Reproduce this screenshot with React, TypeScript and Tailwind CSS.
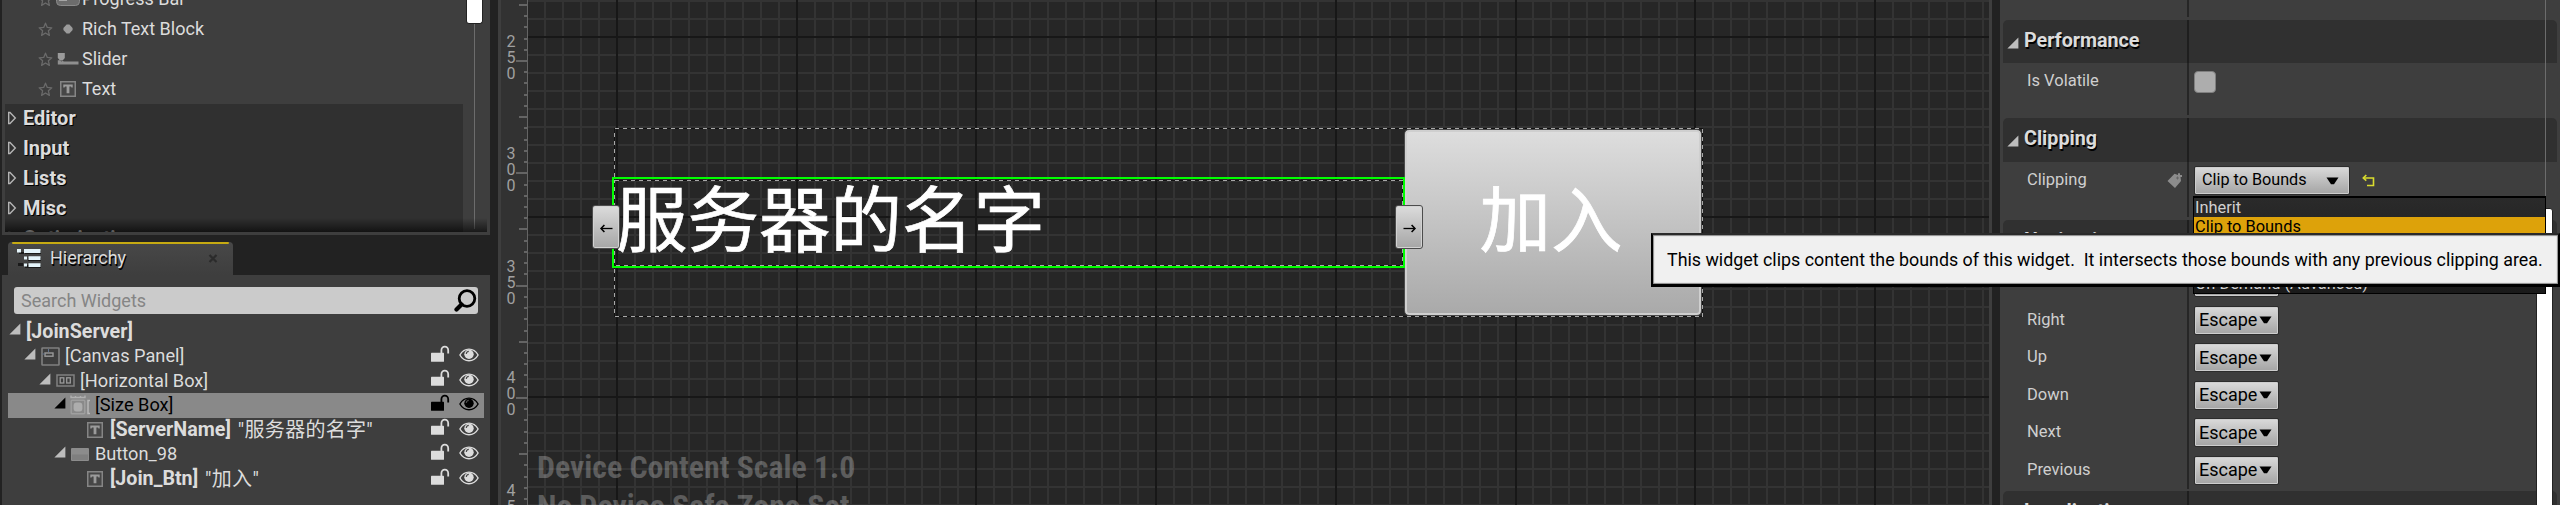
import React from "react";

type IconKind = "progress" | "rich" | "slider" | "text" | "canvas" | "hbox" | "sizebox" | "button" | "none";

function Star() {
  return (
    <svg width="15" height="15" viewBox="0 0 15 15" fill="none" stroke="#6a6a6a" strokeWidth="1.3" strokeLinejoin="round">
      <path d="M7.5 1.2 9.3 5.4 13.8 5.8 10.4 8.8 11.4 13.4 7.5 11 3.6 13.4 4.6 8.8 1.2 5.8 5.7 5.4Z" />
    </svg>
  );
}

function TypeIcon({ kind }: { kind: IconKind }) {
  switch (kind) {
    case "progress":
      return (
        <svg width="24" height="13" viewBox="0 0 24 13">
          <rect x="0.5" y="0.5" width="23" height="12" rx="4" fill="#6c6c6c" stroke="#8a8a8a" />
          <path d="M3 3H11V8H3Z" fill="#a5a5a5" />
        </svg>
      );
    case "rich":
      return (
        <svg width="10" height="10" viewBox="0 0 10 10">
          <path d="M3.6.6h2.8L9.6 4v2L6.4 9.4H3.6L.4 6V4Z" fill="#9b9b9b" />
        </svg>
      );
    case "slider":
      return (
        <svg width="22" height="14" viewBox="0 0 22 14">
          <path d="M.8 1h7v5L5.6 8.6H3L.8 6Z" fill="#9b9b9b" />
          <path d="M.8 8.2H3L4.3 9.4 6 8.8l.6.8H21.5v2.8H.8Z" fill="#8f8f8f" />
        </svg>
      );
    case "text":
      return (
        <svg width="16" height="16" viewBox="0 0 16 16">
          <rect x="0.75" y="0.75" width="14.5" height="14.5" fill="#474747" stroke="#858585" strokeWidth="1.5" />
          <path d="M3.3 3.5h9.4v3h-1.2l-.5-.9H9.4v6.6H6.6V5.6H5l-.5.9H3.3Z" fill="#9b9b9b" />
        </svg>
      );
    case "canvas":
      return (
        <svg className="shrink-0" width="19" height="19" viewBox="0 0 19 19" fill="none">
          <rect x="1" y="1" width="17" height="17" rx="0.5" stroke="#808080" strokeWidth="1.6" />
          <rect x="4" y="6" width="8" height="3.2" stroke="#9a9a9a" strokeWidth="1.4" />
          <path d="M7.5 2v3M1.500 7h2" stroke="#5f7390" />
        </svg>
      );
    case "hbox":
      return (
        <svg className="shrink-0" width="19" height="13" viewBox="0 0 19 13" fill="none">
          <rect x="1" y="1" width="17" height="11" stroke="#808080" strokeWidth="1.5" />
          <rect x="4.2" y="3.8" width="3.6" height="5.2" stroke="#9a9a9a" strokeWidth="1.3" />
          <rect x="10.7" y="3.8" width="3.6" height="5.2" stroke="#9a9a9a" strokeWidth="1.3" />
        </svg>
      );
    case "sizebox":
      return (
        <svg className="shrink-0" width="21" height="20" viewBox="0 0 21 20" fill="none">
          <path d="M1 .5v2h14v-2M5.500 1v1.500M10.500 1v1.500" stroke="#b0b0b0" strokeWidth="1.4" />
          <path d="M20 5.500h-2v13h2" stroke="#b8b8b8" strokeWidth="1.5" />
          <rect x="1.2" y="5.2" width="13.6" height="13.6" rx="1" stroke="#9f9f9f" strokeWidth="1.4" />
          <rect x="3.6" y="7.6" width="8.800" height="8.800" rx="3" fill="#adadad" />
        </svg>
      );
    case "button":
      return (
        <svg width="18" height="13" viewBox="0 0 18 13">
          <rect width="18" height="13" rx="1" fill="#8c8c8c" />
          <rect x="1" y="6.5" width="16" height="5.5" fill="#7f7f7f" />
        </svg>
      );
    default:
      return null;
  }
}

function SolidTriangle({ className }: { className?: string }) {
  return (
    <svg className={className} width="12" height="12" viewBox="0 0 12 12">
      <path d="M11.4.4V11.4H.4Z" fill="currentColor" />
    </svg>
  );
}

function LockIcon() {
  return (
    <svg width="19" height="17" viewBox="0 0 19 17">
      <rect x="0" y="7.8" width="13" height="9" rx="0.6" fill="currentColor" />
      <path d="M10.4 8V5.2a3.4 3.6 0 0 1 6.8 0V8.4" fill="none" stroke="currentColor" strokeWidth="1.8" />
    </svg>
  );
}

function EyeIcon() {
  return (
    <svg width="20" height="14" viewBox="0 0 20 14">
      <path d="M.9 7C3 3.2 6.200 1.100 10 1.100S17 3.200 19.100 7C17 10.800 13.800 12.700 10 12.700S3 10.800.9 7Z" fill="none" stroke="currentColor" strokeWidth="1.4" />
      <circle cx="10" cy="6.300" r="4.700" fill="currentColor" />
      <path d="M7.300 6a2.700 2.700 0 0 1 2.500-2.600" fill="none" stroke="#4a4a4a" strokeWidth="1.100" />
    </svg>
  );
}

function PaletteItem({ label, kind }: { label: string; kind: IconKind }) {
  return (
    <div className="flex h-[30px] shrink-0 items-center pl-[33px]">
      <Star />
      <div className="ml-[3px] flex w-[26px] shrink-0 items-center justify-center pr-0.5">
        <TypeIcon kind={kind} />
      </div>
      <span className="text-[18px] leading-none text-[#dcdcdc]">{label}</span>
    </div>
  );
}

function PaletteCategory({ label }: { label: string }) {
  return (
    <div className="flex h-[30px] w-[458px] shrink-0 items-center bg-[#303030] pb-[3px] pl-[2px]">
      <svg width="10" height="14" viewBox="0 0 10 14" fill="none">
        <path d="M1.700 1.500V12.500H3L8.300 7 3 1.500Z" stroke="#b4b4b4" strokeWidth="1.400" />
      </svg>
      <span className="ml-[6px] text-[20px] font-bold leading-none text-[#dcdcdc] [text-shadow:1px_1px_0_#000]">{label}</span>
    </div>
  );
}

type Node = { pad: string; kind: IconKind; name: string; extra?: string; bold?: boolean; open?: boolean; selected?: boolean; root?: boolean };

const NODES: Node[] = [
  { pad: "pl-[1px]", kind: "none", name: "[JoinServer]", bold: true, open: true, root: true },
  { pad: "pl-[16px]", kind: "canvas", name: "[Canvas Panel]", open: true },
  { pad: "pl-[31px]", kind: "hbox", name: "[Horizontal Box]", open: true },
  { pad: "pl-[46px]", kind: "sizebox", name: "[Size Box]", open: true, selected: true },
  { pad: "pl-[61px]", kind: "text", name: "[ServerName]", extra: '"服务器的名字"', bold: true },
  { pad: "pl-[46px]", kind: "button", name: "Button_98", open: true },
  { pad: "pl-[61px]", kind: "text", name: "[Join_Btn]", extra: '"加入"', bold: true },
];

function TreeRow({ n }: { n: Node }) {
  const tone = n.selected ? "bg-[#898989] text-black" : "text-[#dcdcdc]";
  return (
    <div className={`flex h-[24.6px] w-[476px] shrink-0 items-center ${tone} ${n.pad}`}>
      <div className={`flex w-3 shrink-0 pb-[4px] ${n.selected ? "text-black" : "text-[#bdbdbd]"}`}>{n.open && <SolidTriangle />}</div>
      {!n.root && (
        <div className="ml-[3px] flex w-[22px] shrink-0 items-center justify-center">
          <TypeIcon kind={n.kind} />
        </div>
      )}
      <span className={`whitespace-nowrap leading-none ${n.root ? "ml-[5px]" : "ml-[4px]"} ${n.bold ? "text-[19.700px] font-bold" : "text-[18.200px]"}`}>{n.name}</span>
      {n.extra && <span className="ml-[7px] whitespace-nowrap text-[20px] leading-none tracking-[0.3px]">{n.extra}</span>}
      {!n.root && (
        <div className="ml-auto flex items-center gap-[9px] pr-[5px] pb-0.5">
          <div className="pb-1"><LockIcon /></div>
          <EyeIcon />
        </div>
      )}
    </div>
  );
}

function LeftPanel() {
  return (
    <aside className="flex w-[498px] shrink-0 flex-col bg-[#222222] pl-[2px]">
      <div className="relative flex h-[235px] w-[488px] shrink-0 overflow-hidden bg-[#3e3e3e]">
        <div className="ml-[3px] flex h-[232px] w-[458px] flex-col overflow-hidden">
          <div className="-mt-4 flex flex-col">
            <PaletteItem label="Progress Bar" kind="progress" />
            <PaletteItem label="Rich Text Block" kind="rich" />
            <PaletteItem label="Slider" kind="slider" />
            <PaletteItem label="Text" kind="text" />
            <PaletteCategory label="Editor" />
            <PaletteCategory label="Input" />
            <PaletteCategory label="Lists" />
            <PaletteCategory label="Misc" />
            <PaletteCategory label="Optimization" />
          </div>
        </div>
        <div className="ml-[2px] flex h-[229px] w-[18px] flex-col items-center">
          <div className="h-[24px] w-[17px] shrink-0 rounded-b-[3px] border border-t-0 border-[#222] bg-white" />
          <div className="w-px flex-1 bg-[#6c6c6c]" />
        </div>
        <div className="absolute left-[3px] top-[218px] h-[14px] w-[482px] bg-gradient-to-b from-transparent to-black/60" />
      </div>
      <div className="flex h-[40px] shrink-0 items-end pl-[6px]">
        <div className="flex h-[33px] w-[225px] flex-col rounded-t-[4px] bg-gradient-to-b from-[#484848] to-[#3e3e3e]">
          <div className="mx-1 h-[2px] shrink-0 rounded-full bg-[#c6aa12]" />
          <div className="flex flex-1 items-center pb-0.5 pl-[8px]">
            <svg width="26" height="21" viewBox="0 0 26 21">
              <g fill="#1a1a1a">
                <path d="M3 4h5v2H3zM9 3h16v3H9zM12 10h13v3H12zM2 15h5v3H2zM9 17h16v3H9z" />
              </g>
              <g fill="#e4f4fa">
                <path d="M1 1h4v3.500H1zM8 1h16.500v4H8zM8 8.500h3v3H8zM12.500 8.200h12v3.800h-12zM8 15.500h3v3H8zM12.500 15.200h12V19h-12z" />
              </g>
            </svg>
            <span className="ml-[8px] pb-[2px] text-[18px] leading-none text-[#dcdcdc] [text-shadow:1px_2px_0_#000]">Hierarchy</span>
            <svg className="ml-auto mr-[15px]" width="10" height="11" viewBox="0 0 10 11">
              <path d="M1.500 2 8.500 9M8.500 2 1.500 9" stroke="#2b2b2b" strokeWidth="2.200" />
            </svg>
          </div>
        </div>
      </div>
      <div className="flex w-[488px] flex-1 flex-col bg-[#3e3e3e] pl-[6px] pt-[12px]">
        <div className="ml-[6px] flex h-[27px] w-[464px] shrink-0 items-center rounded-[3px] bg-[#cbcbcb] pl-[7px]">
          <span className="text-[18px] leading-none text-[#858585]">Search Widgets</span>
          <svg className="ml-auto mr-px" width="23" height="23" viewBox="0 0 23 23" fill="none" stroke="#000">
            <circle cx="13" cy="9.500" r="7.800" strokeWidth="2.800" />
            <path d="M7.500 15.500 2.500 20.500" strokeWidth="4.200" strokeLinecap="round" />
          </svg>
        </div>
        <div className="mt-[5.200px] flex flex-col">
          {NODES.map((n) => <TreeRow key={n.name} n={n} />)}
        </div>
      </div>
    </aside>
  );
}

const TICKS = Array.from({ length: 46 }, (_, i) => i - 5);
const RULER_LABELS = [
  { text: "250", h: "h-[112px]" },
  { text: "300", h: "h-[113px]" },
  { text: "350", h: "h-[111px]" },
  { text: "400", h: "h-[113px]" },
  { text: "450", h: "h-[48px]" },
];

function Ruler() {
  return (
    <div className="flex w-[27px] shrink-0 bg-[#323232]">
      <div className="flex w-[15px] flex-col items-center pl-[5px] pt-[34px]">
        {RULER_LABELS.map((l) => (
          <div key={l.text} className={`flex shrink-0 flex-col text-[16px] leading-[16px] text-[#a0a0a0] ${l.h}`}>
            {l.text.split("").map((d, i) => <span key={i}>{d}</span>)}
          </div>
        ))}
      </div>
      <svg width="12" height="505" viewBox="0 0 12 505" shapeRendering="crispEdges">
        {TICKS.map((k) => {
          const y = Math.round(61 + k * 11.23);
          const w = k % 10 === 0 ? 12 : k % 5 === 0 ? 9 : 4;
          return <rect key={k} x={12 - w} y={y - 1} width={w} height="2" fill="#646464" />;
        })}
        <rect x="11" y="0" width="1" height="505" fill="#646464" />
      </svg>
    </div>
  );
}

function GridLines() {
  const cols = Array.from({ length: 82 }, (_, i) => i - 4);
  const rows = Array.from({ length: 29 }, (_, i) => i - 2);
  return (
    <svg className="absolute inset-0" width="1461" height="505" viewBox="0 0 1461 505" shapeRendering="crispEdges">
      {cols.map((k) => <rect key={k} x={Math.round(88 + k * 17.97)} y="0" width="2" height="505" fill="#333333" />)}
      {rows.map((k) => <rect key={k} x="0" y={36 + k * 18} width="1461" height="2" fill="#333333" />)}
      {cols.filter((k) => k % 10 === 0).map((k) => <rect key={k} x={Math.round(88 + k * 17.97)} y="0" width="2" height="505" fill="#171717" />)}
      {rows.filter((k) => k % 10 === 0).map((k) => <rect key={k} x="0" y={36 + k * 18} width="1461" height="2" fill="#171717" />)}
    </svg>
  );
}

function DashedRect({ w, h }: { w: number; h: number }) {
  return (
    <svg className="absolute inset-0" width={w} height={h} viewBox={`0 0 ${w} ${h}`} fill="none" shapeRendering="crispEdges">
      <rect x="0.5" y="0.5" width={w - 1} height={h - 1} stroke="#111" />
      <rect x="0.5" y="0.5" width={w - 1} height={h - 1} stroke="#a8a8a8" strokeDasharray="4 4" />
    </svg>
  );
}

function Handle({ flip }: { flip?: boolean }) {
  return (
    <div className="flex h-[44px] w-[28px] items-center justify-center rounded-[3px] border border-[#4c4c4c] bg-gradient-to-b from-[#dcdcdc] to-[#a6a6a6] pt-[3px] shadow-[inset_0_0_0_1px_#d2d2d2]">
      <svg className={flip ? "-scale-x-100" : ""} width="13" height="9" viewBox="0 0 13 9" fill="none" stroke="#000" strokeWidth="1.300">
        <path d="M.8 4.500H12.500" />
        <path d="M4.400 1 1 4.500 4.400 8" strokeWidth="1.600" />
      </svg>
    </div>
  );
}

function Canvas() {
  return (
    <main className="relative w-[1461px] shrink-0 overflow-hidden bg-[#262626]">
      <GridLines />
      <div className="absolute left-[86px] top-[128px] h-[189px] w-[1089px]">
        <DashedRect w={1089} h={189} />
      </div>
      <div className="absolute left-[876px] top-[129px] flex h-[187px] w-[298px] items-center justify-center rounded-[5px] border border-[#4a4a4a] bg-gradient-to-b from-[#dedede] to-[#a9a9a9] pb-[2px] pr-[4px] shadow-[inset_0_0_0_2px_#cfcfcf]">
        <span className="text-[71.500px] leading-none text-white [-webkit-text-stroke:0.7px_white]">加入</span>
      </div>
      <div className="absolute left-[84px] top-[177px] h-[91px] w-[793px] border-2 border-[#00ff00]">
        <div className="absolute left-0 top-[1px] h-[86px] w-[789px]">
          <DashedRect w={789} h={86} />
        </div>
        <div className="relative flex h-full items-center pb-[2px] pl-[2px]">
          <span className="whitespace-nowrap text-[71.500px] leading-none text-white [-webkit-text-stroke:0.7px_white]">服务器的名字</span>
        </div>
      </div>
      <div className="absolute left-[64px] top-[205px]"><Handle /></div>
      <div className="absolute left-[867px] top-[205px]"><Handle flip /></div>
      <div className="absolute left-[9px] top-[448px] font-['Roboto_Condensed','Roboto',sans-serif] text-[31.800px] font-bold leading-[39px] text-white/25">
        <div className="whitespace-nowrap">Device Content Scale 1.0</div>
        <div className="whitespace-nowrap">No Device Safe Zone Set</div>
      </div>
    </main>
  );
}

function DownArrow() {
  return (
    <svg width="13" height="8" viewBox="0 0 13 8">
      <path d="M.5.5H12.500L8 7.300H5Z" fill="#000" />
    </svg>
  );
}

const COMBO = "flex items-center rounded-[2px] border border-[#2c2c2c] bg-gradient-to-b from-[#dadada] to-[#a4a4a4] text-black shadow-[inset_0_0_0_1px_#cdcdcd]";

function SectionHeader({ label, h }: { label: string; h: string }) {
  return (
    <div className={`mx-[3px] flex shrink-0 rounded-t-[5px] bg-[#303030] ${h}`}>
      <div className="flex h-[44px] w-[184px] items-center pl-[4px]">
        <SolidTriangle className="mt-[2px] text-[#bdbdbd]" />
        <span className="ml-[5px] pb-[2px] text-[19.700px] font-bold leading-none text-[#dcdcdc] [text-shadow:1px_2px_0_#000]">{label}</span>
      </div>
      <div className="w-[2px] bg-[#1e1e1e]" />
    </div>
  );
}

function PropRow({ label, h, icon, children }: { label: string; h: string; icon?: React.ReactNode; children?: React.ReactNode }) {
  return (
    <div className={`flex shrink-0 ${h}`}>
      <div className="flex h-[37px] w-[187px] items-center pl-[27px] pr-[4px]">
        <span className="text-[16.500px] leading-none text-[#cfcfcf]">{label}</span>
        <div className="ml-auto">{icon}</div>
      </div>
      <div className="w-[2px] bg-[#262626]" />
      <div className="flex h-[37px] items-center pl-[5px]">{children}</div>
    </div>
  );
}

function EscapeCombo() {
  return (
    <div className={`${COMBO} h-[29px] w-[85px] pl-[4px]`}>
      <span className="text-[18px] leading-none">Escape</span>
      <div className="ml-[2px]"><DownArrow /></div>
    </div>
  );
}

function DetailsPanel() {
  return (
    <aside className="relative flex w-[560px] shrink-0 flex-col bg-[#3e3e3e]">
      <div className="ml-[187px] h-[17px] w-[2px] shrink-0 bg-[#262626]" />
      <div className="h-[3px] shrink-0" />
      <SectionHeader label="Performance" h="h-[43px]" />
      <PropRow label="Is Volatile" h="h-[52px]">
        <div className="h-[22px] w-[22px] rounded-[4px] border border-[#808080] bg-[#adadad]" />
      </PropRow>
      <div className="h-[3px] shrink-0" />
      <SectionHeader label="Clipping" h="h-[44px]" />
      <PropRow
        label="Clipping"
        h="h-[55px]"
        icon={
          <svg width="16" height="17" viewBox="0 0 16 17">
            <path d="M.5 9 7.500 1.800 11 3V1.200h2V3h2v2h-1.500l.5 4L8 16Z" fill="#8c8c8c" />
            <path d="M9 6h3M10.500 4.500v3" stroke="#666" strokeWidth="1" />
          </svg>
        }
      >
        <div className={`${COMBO} h-[29px] w-[156px] justify-between pl-[7px] pr-[10px]`}>
          <span className="text-[16.200px] leading-none">Clip to Bounds</span>
          <DownArrow />
        </div>
        <svg className="ml-[12px]" width="14" height="14" viewBox="0 0 14 14" fill="none" stroke="#d9dc2e" strokeWidth="1.600">
          <path d="M2 4H11.500V11.500H5" />
          <path d="M4.300 1 1.300 4 4.300 6.600" />
        </svg>
      </PropRow>
      <div className="h-[3px] shrink-0" />
      <SectionHeader label="Navigation" h="h-[44px]" />
      {["Left", "Right", "Up", "Down", "Next", "Previous"].map((l) => (
        <PropRow key={l} label={l} h="h-[37.500px]"><EscapeCombo /></PropRow>
      ))}
      <div className="h-[2px] shrink-0" />
      <SectionHeader label="Localization" h="h-[44px]" />

      <div className="absolute left-[545px] top-0 h-[209px] w-px bg-[#6c6c6c]" />
      <div className="absolute left-[536px] top-[208px] h-[300px] w-[17px] rounded-[3px] border border-[#222] bg-white" />
      <div className="absolute left-[193px] top-[196px] flex h-[98px] w-[353px] flex-col border border-t-2 border-black bg-gradient-to-b from-[#2a2a2a] to-[#1a1a1a] text-[16.400px] leading-[19px] text-[#d0d0d0]">
        {["Inherit", "Clip to Bounds", "Clip to Bounds - Without Intersecting (Advanced)", "Clip to Bounds - Always (Advanced)", "On Demand (Advanced)"].map((t, i) => (
          <div key={t} className={`h-[19px] shrink-0 pl-px ${i === 1 ? "bg-[#dda20a] text-black" : ""}`}>{t}</div>
        ))}
      </div>
    </aside>
  );
}

export default function App() {
  return (
    <div className="relative flex h-[505px] w-[2560px] overflow-hidden bg-[#222222] font-['Roboto','Noto_Sans_CJK_SC',sans-serif]">
      <LeftPanel />
      <div className="w-[3px] shrink-0 bg-[#3e3e3e]" />
      <Ruler />
      <Canvas />
      <div className="w-[3px] shrink-0 bg-[#3e3e3e]" />
      <div className="w-[8px] shrink-0 bg-[#222222]" />
      <DetailsPanel />
      <div className="absolute left-[1651px] top-[233px] flex h-[54px] w-[909px] items-center border-2 border-b-[3px] border-black border-t-[#2a2a2a] bg-[#f0f0f0] pl-[14px] shadow-[inset_0_0_1px_1px_#8a8a8a]">
        <span className="whitespace-pre text-[17.850px] leading-none text-black">This widget clips content the bounds of this widget.  It intersects those bounds with any previous clipping area.</span>
      </div>
    </div>
  );
}
